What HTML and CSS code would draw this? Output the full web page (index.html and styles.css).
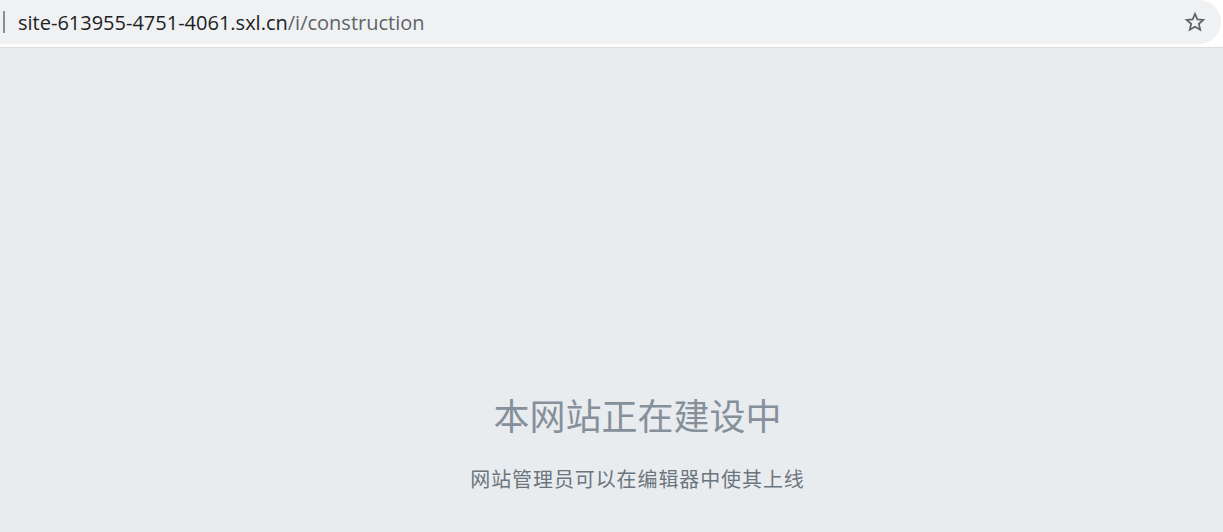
FILE: index.html
```html
<!DOCTYPE html>
<html lang="zh">
<head>
<meta charset="utf-8">
<title>construction</title>
<link rel="stylesheet" href="styles.css">
</head>
<body>
<div class="topbar">
  <div class="omnibox">
    <span class="caret"></span>
    <span class="url"><span class="host">site-613955-4751-4061.sxl.cn</span><span class="path">/i/construction</span></span>
    <svg class="star" width="22" height="22" viewBox="0 0 24 24"><path d="M12 3.2l2.6 6 6.5.6-4.9 4.3 1.5 6.4L12 17.1 6.3 20.5l1.5-6.4L2.9 9.8l6.5-.6z" fill="none" stroke="#5f6368" stroke-width="1.9" stroke-linejoin="miter"/></svg>
  </div>
</div>
<main class="page">
  <div class="content">
    <h1 class="title">本网站正在建设中</h1>
    <p class="sub">网站管理员可以在编辑器中使其上线</p>
  </div>
</main>
</body>
</html>
```
FILE: styles.css
```css
html, body { margin: 0; padding: 0; height: 100%; }
body {
  background: #e9ecef;
  font-family: "Noto Sans", "Noto Sans CJK SC", sans-serif;
  overflow: hidden;
}
.topbar {
  background: #ffffff;
  border-bottom: 1px solid #dadce0;
  box-sizing: border-box;
  height: 48px;
}
.omnibox {
  height: 44px;
  margin-right: 2px;
  background: #eff1f3;
  border-radius: 0 22px 22px 0;
  display: flex;
  align-items: center;
  padding-left: 3px;
  padding-right: 15px;
}
.caret {
  width: 2px;
  height: 22px;
  background: #8a8d91;
  margin-right: 13px;
}
.url {
  flex: 1;
  font-family: "Open Sans", "Noto Sans", sans-serif;
  font-size: 20px;
  color: #202124;
  white-space: nowrap;
}
.path { color: #5f6368; }
.star { display: block; }
.page {
  height: calc(100% - 48px);
  display: flex;
  justify-content: center;
  padding-left: 52px;
  box-sizing: border-box;
}
.content {
  text-align: center;
  padding-top: 341px;
}
.title {
  margin: 0;
  font-weight: 400;
  font-size: 36px;
  line-height: 50px;
  color: #86909b;
  font-family: "Noto Sans CJK SC", sans-serif;
}
.sub {
  margin: 26px 0 0;
  font-size: 20px;
  line-height: 28px;
  color: #6c757d;
  letter-spacing: 0.9px;
  font-family: "Noto Sans CJK SC", sans-serif;
}
```
